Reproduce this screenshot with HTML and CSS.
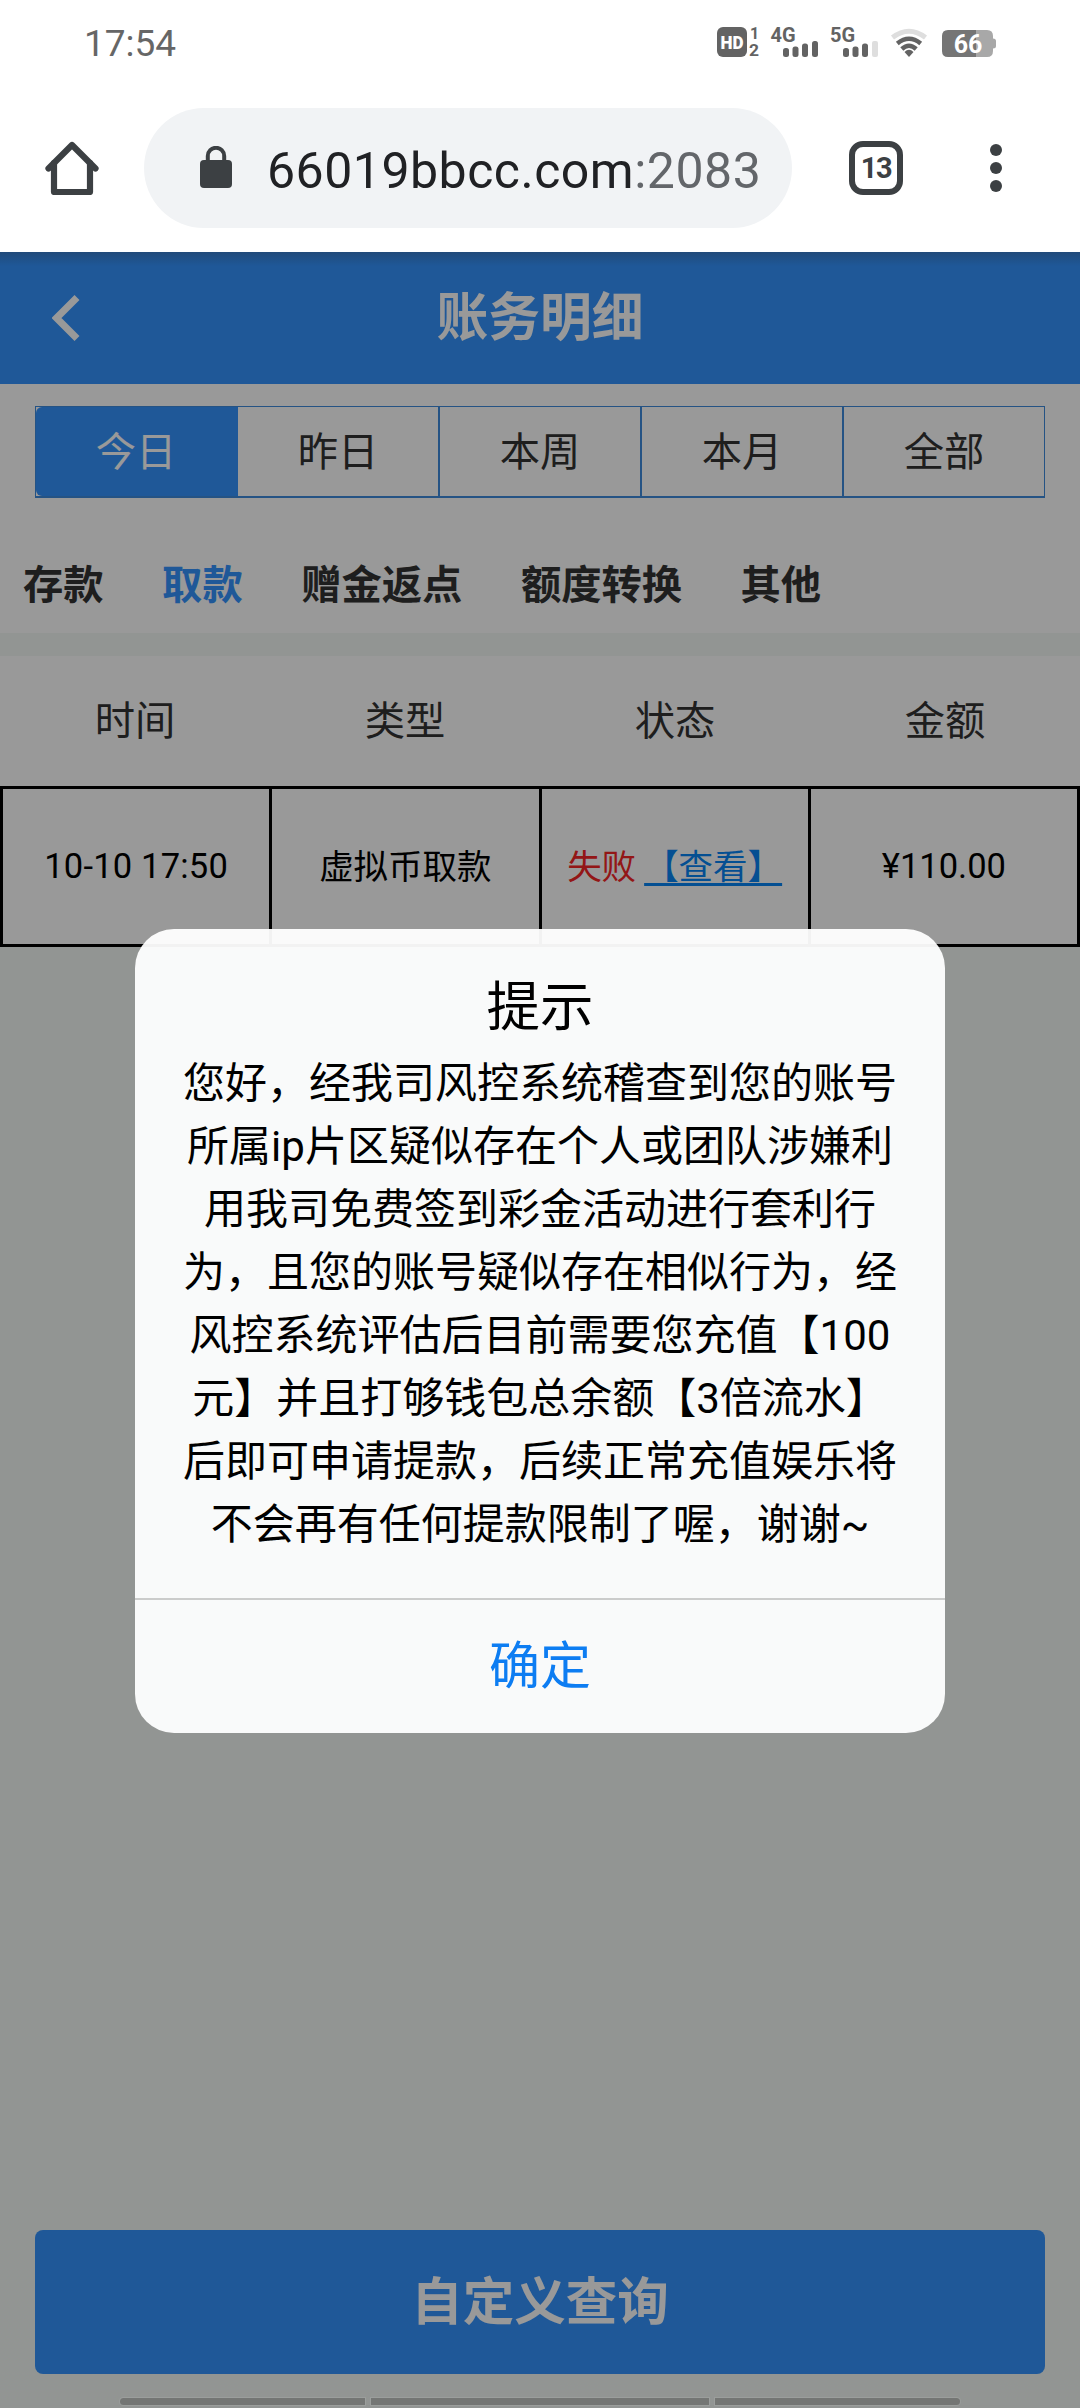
FILE: index.html
```html
<!DOCTYPE html>
<html lang="zh-CN">
<head>
<meta charset="utf-8">
<title>账务明细</title>
<link rel="stylesheet" href="styles.css">
</head>
<body>
<div class="screen">
  <div class="statusbar">
    <span class="clock">17:54</span>
    <svg class="status-icons" width="288" height="40" viewBox="712 22 288 40">
      <rect x="717" y="27" width="30" height="30" rx="6" fill="#636363"/>
      <text x="732" y="48.500" class="st hd" textLength="23" lengthAdjust="spacingAndGlyphs">HD</text>
      <text x="754.500" y="38.500" class="st mini">1</text>
      <text x="754" y="56" class="st mini" textLength="10" lengthAdjust="spacingAndGlyphs">2</text>
      <text x="783" y="42" class="st gen">4G</text>
      <g fill="#636363">
        <rect x="783" y="48" width="6" height="9" rx="2.500"/>
        <rect x="792.500" y="46.500" width="6" height="10.500" rx="2.500"/>
        <rect x="802" y="43.500" width="6" height="13.500" rx="2.500"/>
        <rect x="812" y="41" width="6" height="16" rx="2.500"/>
        <rect x="843" y="48" width="6" height="9" rx="2.500"/>
        <rect x="852.500" y="46.500" width="6" height="10.500" rx="2.500"/>
        <rect x="862" y="43.500" width="6" height="13.500" rx="2.500"/>
      </g>
      <rect x="872" y="41" width="6" height="16" rx="2" fill="#dedede"/>
      <text x="842.500" y="42" class="st gen">5G</text>
      <g fill="none" stroke="#636363" stroke-width="4.500">
        <path d="M892.500 37.500Q909 25 925.500 37.500" stroke="#dedede" stroke-width="5"/>
        <path d="M897.300 43.500Q909 34 920.700 43.500"/>
        <path d="M901.800 49Q909 42.500 916.200 49"/>
      </g>
      <path d="M904.500 52Q909 47.500 913.500 52L909 57Z" fill="#636363"/>
      <path d="M948 30H976V57H948Q942 57 942 51V36Q942 30 948 30Z" fill="#757575"/>
      <path d="M976 30H987Q993 30 993 36V38.500Q996 38.500 996 41V46Q996 48.500 993 48.500V51Q993 57 987 57H976Z" fill="#a8a8a8"/>
      <text x="968" y="53" class="st batt">66</text>
    </svg>
  </div>

  <div class="toolbar">
    <svg class="home" width="54" height="54" viewBox="0 0 54 54" fill="none" stroke="#3c4043" stroke-width="6.200" stroke-linejoin="round" stroke-linecap="round">
      <path d="M3.500 27.500L27 4L50.500 27.500"/>
      <path d="M9 22V51H45V22" />
    </svg>
    <div class="omnibox">
      <svg class="lock" width="32" height="42" viewBox="0 0 32 42">
        <rect y="14" width="32" height="28" rx="4" fill="#3c4043"/>
        <path d="M7.800 15V10A8.200 8.200 0 0 1 24.200 10V15" fill="none" stroke="#3c4043" stroke-width="4"/>
      </svg>
      <div class="url"><span class="host">66019bbcc.com</span><span class="port">:2083</span></div>
    </div>
    <div class="tabcount">13</div>
    <div class="menu"><i></i><i></i><i></i></div>
  </div>

  <div class="page">
    <div class="navbar">
      <svg class="back" width="28" height="46" viewBox="0 0 28 46"><path d="M25 2.500L4.500 23L25 43.500" fill="none" stroke="#fff" stroke-width="7"/></svg>
      <h1>账务明细</h1>
    </div>
    <div class="filters">
      <div class="segments">
        <div class="segment active">今日</div>
        <div class="segment">昨日</div>
        <div class="segment">本周</div>
        <div class="segment">本月</div>
        <div class="segment">全部</div>
      </div>
      <div class="tabs">
        <span>存款</span><span class="current">取款</span><span>赠金返点</span><span>额度转换</span><span>其他</span>
      </div>
    </div>
    <div class="heads"><span>时间</span><span>类型</span><span>状态</span><span>金额</span></div>
    <div class="record">
      <div class="cell latin"><span class="date">10-10 17:50</span></div>
      <div class="cell">虚拟币取款</div>
      <div class="cell"><span class="fail">失败</span><span class="view">【查看】</span></div>
      <div class="cell latin"><span class="amount">¥110.00</span></div>
    </div>
    <div class="footer"><div class="query">自定义查询</div></div>

    <div class="mask">
      <div class="dialog">
        <div class="dialog-body">
          <h2>提示</h2>
          <p>您好，经我司风控系统稽查到您的账号<br>所属ip片区疑似存在个人或团队涉嫌利<br>用我司免费签到彩金活动进行套利行<br>为，且您的账号疑似存在相似行为，经<br>风控系统评估后目前需要您充值【100<br>元】并且打够钱包总余额【3倍流水】<br>后即可申请提款，后续正常充值娱乐将<br>不会再有任何提款限制了喔，谢谢~</p>
        </div>
        <div class="confirm">确定</div>
      </div>
      <div class="gesture"><i></i><i class="mid"></i><i></i></div>
    </div>
  </div>
</div>
</body>
</html>
```

FILE: styles.css
```css
* { box-sizing: border-box; }

body {
  margin: 0;
  background: #fff;
  font-family: Roboto, "Noto Sans CJK SC", sans-serif;
  color: #333;
  text-spacing-trim: space-all;
}

h1, h2, p { margin: 0; }

.screen {
  width: 1080px;
  height: 2408px;
  display: flex;
  flex-direction: column;
  overflow: hidden;
}

/* System status bar */
.statusbar {
  height: 84px;
  padding: 22px 80px 0 84px;
  display: flex;
  justify-content: space-between;
  align-items: flex-start;
}

.clock {
  font-size: 37px;
  line-height: 44px;
  color: #666;
}

.st { font-family: Roboto, sans-serif; font-weight: 700; fill: #636363; text-anchor: middle; }
.st.hd { font-size: 19px; fill: #fff; font-weight: 900; }
.st.mini { font-size: 16px; }
.st.gen { font-size: 20px; }
.st.batt { font-size: 25px; fill: #fff; }

/* Browser toolbar */
.toolbar {
  height: 168px;
  padding-left: 45px;
  display: flex;
  align-items: center;
}

.omnibox {
  width: 648px;
  height: 120px;
  margin-left: 45px;
  padding-left: 56px;
  border-radius: 60px;
  background: #f1f3f5;
  display: flex;
  align-items: center;
}

.lock { margin-top: -3px; }

.url {
  margin-left: 35px;
  white-space: nowrap;
  font-size: 50px;
  line-height: 64px;
  padding-top: 6px;
  letter-spacing: 0.5px;
  color: #202124;
}

.port { color: #63666a; }

.tabcount {
  width: 54px;
  height: 54px;
  margin-left: 57px;
  border: 6px solid #3c4043;
  border-radius: 14px;
  font: 700 29px/42px Roboto, sans-serif;
  letter-spacing: -1.5px;
  text-align: center;
  color: #3c4043;
}

.menu {
  margin-left: 87px;
  display: flex;
  flex-direction: column;
  gap: 6px;
}

.menu i { width: 12px; height: 12px; border-radius: 50%; background: #3c4043; }

/* Account page */
.page {
  position: relative;
  flex: 1;
  background: #f4f8f5;
  display: flex;
  flex-direction: column;
}

.navbar {
  height: 132px;
  padding: 0 80px 0 52px;
  background: linear-gradient(#377ccc, #3493fe 14px);
  color: #fff;
  display: flex;
  align-items: center;
}

.navbar h1 {
  flex: 1;
  font-size: 51.800px;
  line-height: 72px;
  padding-top: 2px;
  text-align: center;
}

.filters {
  height: 249px;
  padding: 22px 0 0;
  background: #fff;
}

.segments {
  width: 1010px;
  height: 92px;
  margin: 0 35px;
  border: 1px solid #3f8bdd;
  border-bottom-width: 2px;
  display: flex;
}

.segment {
  flex: 1;
  border-left: 2px solid #3f8bdd;
  font-size: 40.300px;
  line-height: 91px;
  height: 89px;
  text-align: center;
}

.segment:first-child { border-left: 0; }

.segment.active {
  background: #3493fe;
  color: #fff;
  border-radius: 6px 0 0 6px;
}

.segment.active + .segment { border-left-color: #3493fe; }

.tabs {
  padding: 59px 23px 0;
  display: flex;
  gap: 58.500px;
  font-size: 40.300px;
  font-weight: 700;
  line-height: 58px;
}

.tabs .current { color: #3493fe; }

.heads {
  margin-top: 23px;
  height: 130px;
  background: #fff;
  display: grid;
  grid-template-columns: repeat(4, 1fr);
  text-align: center;
  font-size: 40.300px;
  line-height: 131px;
}

.record {
  height: 161px;
  border: 3px solid #000;
  background: #fff;
  display: flex;
  color: #000;
  font-size: 34.500px;
}

.cell {
  flex: 1 1 269px;
  border-left: 3px solid #000;
  display: flex;
  align-items: center;
  justify-content: center;
  white-space: nowrap;
  padding-bottom: 6px;
}

.cell:first-child { flex-basis: 266px; border-left: 0; }
.cell.latin { padding-bottom: 2px; }

.date { letter-spacing: 0.2px; }
.fail { color: #f52525; }
.view {
  margin-left: 8px;
  color: #0784f4;
  text-decoration: underline;
  text-decoration-thickness: 3px;
  text-underline-offset: 4px;
  text-decoration-skip-ink: none;
}

.footer { margin-top: auto; padding: 0 35px 34px; }

.query {
  height: 144px;
  border-radius: 8px;
  background: #3493fe;
  color: #fff;
  font-size: 51.500px;
  font-weight: 700;
  line-height: 146px;
  text-align: center;
}

/* Dialog layer over the page */
.mask {
  position: absolute;
  inset: 0;
  background: rgba(0, 0, 0, 0.4);
  display: flex;
  flex-direction: column;
  align-items: center;
  justify-content: space-between;
  padding-top: 677px;
}

.dialog {
  width: 810px;
  height: 804px;
  border-radius: 39px;
  background: rgba(255, 255, 255, 0.95);
  color: #000;
  text-align: center;
  display: flex;
  flex-direction: column;
}

.dialog-body {
  height: 672px;
  border-bottom: 2px solid #cbcccb;
  padding-top: 41px;
}

.dialog h2 {
  font-size: 53.500px;
  font-weight: 400;
  line-height: 76px;
}

.dialog p {
  margin-top: 6px;
  font-size: 42px;
  line-height: 63px;
  white-space: nowrap;
}

.confirm {
  font-size: 51px;
  line-height: 133px;
  color: #0d7df2;
}

.gesture {
  display: flex;
  gap: 6px;
  padding-bottom: 3px;
}

.gesture i {
  width: 245px;
  height: 7px;
  background: #747674;
  box-shadow: 0 0 0 1px #9b9e9c;
}

.gesture .mid { width: 338px; }
.gesture i:first-child { border-radius: 4px 0 0 4px; }
.gesture i:last-child { border-radius: 0 4px 4px 0; }
```
